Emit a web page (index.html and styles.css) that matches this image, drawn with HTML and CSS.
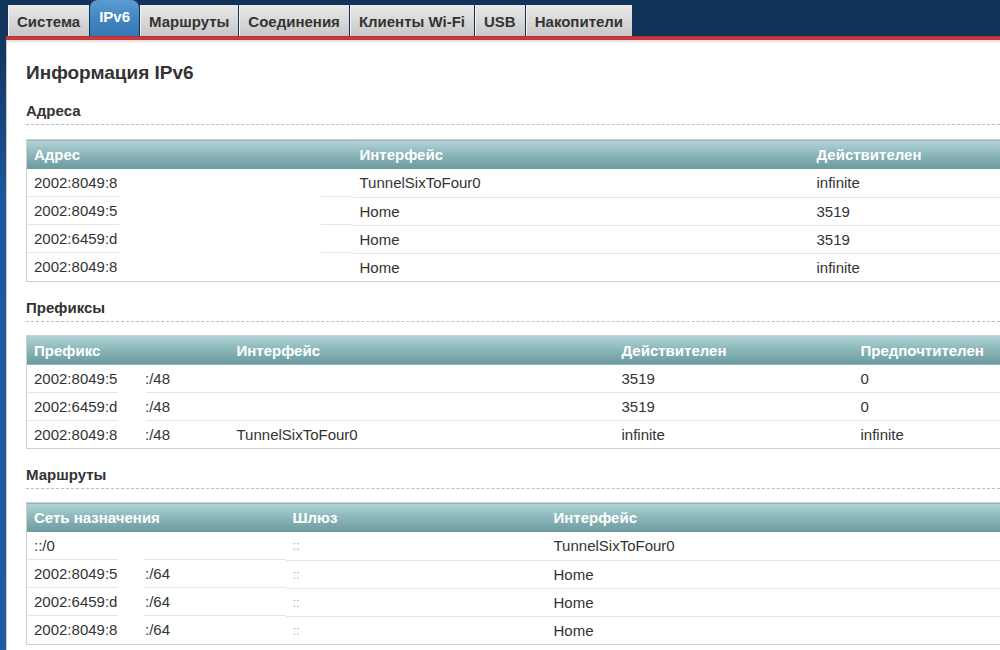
FILE: index.html
```html
<!DOCTYPE html>
<html lang="ru">
<head>
<meta charset="utf-8">
<title>Информация IPv6</title>
<link rel="stylesheet" href="styles.css">
</head>
<body>
<div class="page">
  <div class="side"></div>
  <div class="main">
    <nav class="tabbar">
      <a class="tab">Система</a>
      <a class="tab active">IPv6</a>
      <a class="tab">Маршруты</a>
      <a class="tab">Соединения</a>
      <a class="tab">Клиенты Wi-Fi</a>
      <a class="tab">USB</a>
      <a class="tab">Накопители</a>
    </nav>
    <div class="redline"></div>
    <div class="content">
      <h2 class="title">Информация IPv6</h2>

      <h3 class="section">Адреса</h3>
      <table class="grid addr">
        <colgroup><col class="a1"><col class="a2"><col></colgroup>
        <thead><tr><th>Адрес</th><th>Интерфейс</th><th>Действителен</th></tr></thead>
        <tbody>
          <tr><td class="red">2002:8049:8</td><td>TunnelSixToFour0</td><td>infinite</td></tr>
          <tr><td class="red">2002:8049:5</td><td>Home</td><td>3519</td></tr>
          <tr><td class="red">2002:6459:d</td><td>Home</td><td>3519</td></tr>
          <tr class="last"><td class="red">2002:8049:8</td><td>Home</td><td>infinite</td></tr>
        </tbody>
      </table>

      <h3 class="section">Префиксы</h3>
      <table class="grid pref">
        <colgroup><col class="p1"><col class="p2"><col class="p3"><col></colgroup>
        <thead><tr><th>Префикс</th><th>Интерфейс</th><th>Действителен</th><th>Предпочтителен</th></tr></thead>
        <tbody>
          <tr><td class="red"><span class="cut">2002:8049:5</span><span class="tail">:/48</span></td><td></td><td>3519</td><td>0</td></tr>
          <tr><td class="red"><span class="cut">2002:6459:d</span><span class="tail">:/48</span></td><td></td><td>3519</td><td>0</td></tr>
          <tr class="last"><td class="red"><span class="cut">2002:8049:8</span><span class="tail">:/48</span></td><td>TunnelSixToFour0</td><td>infinite</td><td>infinite</td></tr>
        </tbody>
      </table>

      <h3 class="section">Маршруты</h3>
      <table class="grid route">
        <colgroup><col class="r1"><col class="r2"><col></colgroup>
        <thead><tr><th>Сеть назначения</th><th>Шлюз</th><th>Интерфейс</th></tr></thead>
        <tbody>
          <tr><td class="red">::/0</td><td class="gw">::</td><td>TunnelSixToFour0</td></tr>
          <tr><td class="red"><span class="cut">2002:8049:5</span><span class="tail">:/64</span></td><td class="gw">::</td><td>Home</td></tr>
          <tr><td class="red"><span class="cut">2002:6459:d</span><span class="tail">:/64</span></td><td class="gw">::</td><td>Home</td></tr>
          <tr class="last"><td class="red"><span class="cut">2002:8049:8</span><span class="tail">:/64</span></td><td class="gw">::</td><td>Home</td></tr>
        </tbody>
      </table>
    </div>
  </div>
</div>
</body>
</html>
```

FILE: styles.css
```css
html, body {
  margin: 0;
  padding: 0;
  height: 100%;
  overflow: hidden;
}
body {
  background: #12335a;
  font-family: "Liberation Sans", Arial, sans-serif;
  color: #333;
}
.page {
  display: flex;
  min-height: 100vh;
}
.side {
  width: 6px;
  flex: none;
  background: linear-gradient(#13345b 0, #13345b 40px, #1d57a0 200px, #1f5ca4 100%);
}
.main {
  flex: 1;
  min-width: 0;
  display: flex;
  flex-direction: column;
}
.tabbar {
  height: 36px;
  display: flex;
  align-items: flex-end;
  padding-left: 2px;
  background: #12335a;
}
.tab {
  height: 31px;
  box-sizing: border-box;
  display: flex;
  align-items: center;
  padding: 1px 9px 0 9px;
  margin-right: 1px;
  font-size: 15px;
  font-weight: bold;
  color: #333;
  background: linear-gradient(#e9e9e9, #d2d2d2 70%, #c6c6c6);
  box-shadow: inset 1px 0 0 #f2f2f2;
  cursor: pointer;
}
.tab.active {
  height: 36px;
  padding-top: 0;
  padding-bottom: 3px;
  color: #fff;
  box-shadow: none;
  border-radius: 8px 8px 0 0;
  background: linear-gradient(#5a9cd2, #3f83bf 60%, #3878b3);
}
.redline {
  height: 4px;
  background: linear-gradient(#a82a2f, #cf3a3e 40%, #c4353a);
}
.content {
  flex: 1;
  background: linear-gradient(#dcdcdc, #ffffff 4px);
  border-left: 1px solid #c9c9c9;
  padding: 21px 0 0 19px;
  overflow: hidden;
}
.title {
  margin: 0;
  font-size: 19px;
  line-height: 24px;
  font-weight: bold;
  color: #333;
}
.section {
  margin: 16px 0 13px 0;
  padding-bottom: 3px;
  font-size: 15px;
  line-height: 20px;
  font-weight: bold;
  color: #333;
  border-bottom: 1px dashed #bdbdbd;
}
.title + .section {
  margin-top: 16px;
  margin-bottom: 14px;
}
.grid {
  width: 1000px;
  border-collapse: collapse;
  table-layout: fixed;
  border: 1px solid #cfcfcf;
  font-size: 15px;
}
.grid th {
  height: 29px;
  padding: 0 0 0 7px;
  text-align: left;
  font-weight: bold;
  color: #fff;
  background: linear-gradient(#b3d5d7, #94bec1 35%, #76a4a8 80%, #6c999e);
}
.grid td {
  height: 27px;
  padding: 0 0 0 7px;
  white-space: nowrap;
  color: #333;
  border-bottom: 1px solid #e6e6e6;
  background: #fff;
}
.grid tr.last td {
  border-bottom: none;
}
.grid td.red {
  border-bottom: none;
  padding-bottom: 1px;
  background-repeat: no-repeat;
}
.grid tr.last td.red {
  padding-bottom: 0;
  background-image: none !important;
}
.a1 { width: 326px; }
.a2 { width: 457px; }
.p1 { width: 203px; }
.p2 { width: 385px; }
.p3 { width: 239px; }
.r1 { width: 259px; }
.r2 { width: 261px; }

.addr td.red {
  background-image: linear-gradient(#e6e6e6, #e6e6e6), linear-gradient(#e6e6e6, #e6e6e6);
  background-size: 92px 1px, 32px 1px;
  background-position: left bottom, right bottom;
}
.pref td.red {
  background-image: linear-gradient(#e6e6e6, #e6e6e6), linear-gradient(#e6e6e6, #e6e6e6);
  background-size: 91px 1px, 84px 1px;
  background-position: left bottom, right bottom;
}
.route td.red {
  background-image: linear-gradient(#e6e6e6, #e6e6e6), linear-gradient(#e6e6e6, #e6e6e6);
  background-size: 91px 1px, 142px 1px;
  background-position: left bottom, right bottom;
}
.cut {
  display: inline-block;
  width: 85px;
  white-space: nowrap;
  vertical-align: top;
}
.tail {
  display: inline-block;
  margin-left: 26px;
  vertical-align: top;
}
.gw {
  color: #aaa !important;
  font-size: 13px;
}
```
